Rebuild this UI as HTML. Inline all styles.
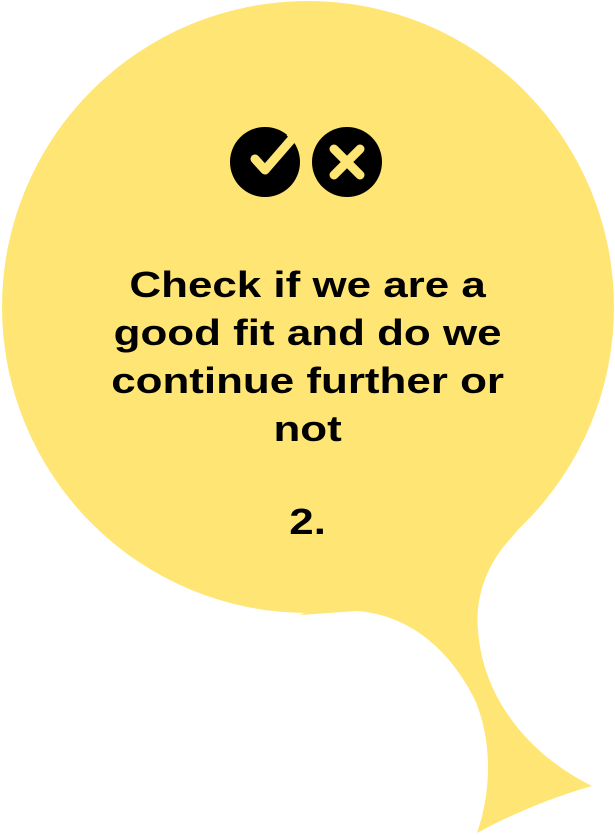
<!DOCTYPE html>
<html><head><style>
html,body{margin:0;padding:0;background:#fff;width:615px;height:835px;overflow:hidden}
.t{position:absolute;left:0;width:615px;text-align:center;font-family:"Liberation Sans",sans-serif;font-weight:bold;font-size:36px;line-height:48px;color:#000;transform:scaleX(1.22);transform-origin:307px 0}
</style></head><body>
<svg width="615" height="835" style="position:absolute;left:0;top:0">
<circle cx="308" cy="307" r="306" fill="#FFE574"/>
<path d="M547 495 L512 537 C485 565 475 600 478 630 C482 690 520 750 592 786 C550 798 510 815 477 833 C492 790 492 740 475 700 C450 650 410 615 357 611 L300 615 Z" fill="#FFE574"/>
<circle cx="265" cy="162" r="35" fill="#000"/>
<circle cx="347" cy="162" r="35" fill="#000"/>
<path d="M255 159 L265 170 L291 140" stroke="#FFE574" stroke-width="9" fill="none" stroke-linecap="round" stroke-linejoin="round"/>
<path d="M288 134 L296 142" stroke="#FFE574" stroke-width="4"/>
<path d="M334 149 L360 175 M360 149 L334 175" stroke="#FFE574" stroke-width="9" stroke-linecap="round"/>
</svg>
<div class="t" style="top:261px">Check if we are a<br>good fit and do we<br>continue further or<br>not</div>
<div class="t" style="top:498px">2.</div>
</body></html>
